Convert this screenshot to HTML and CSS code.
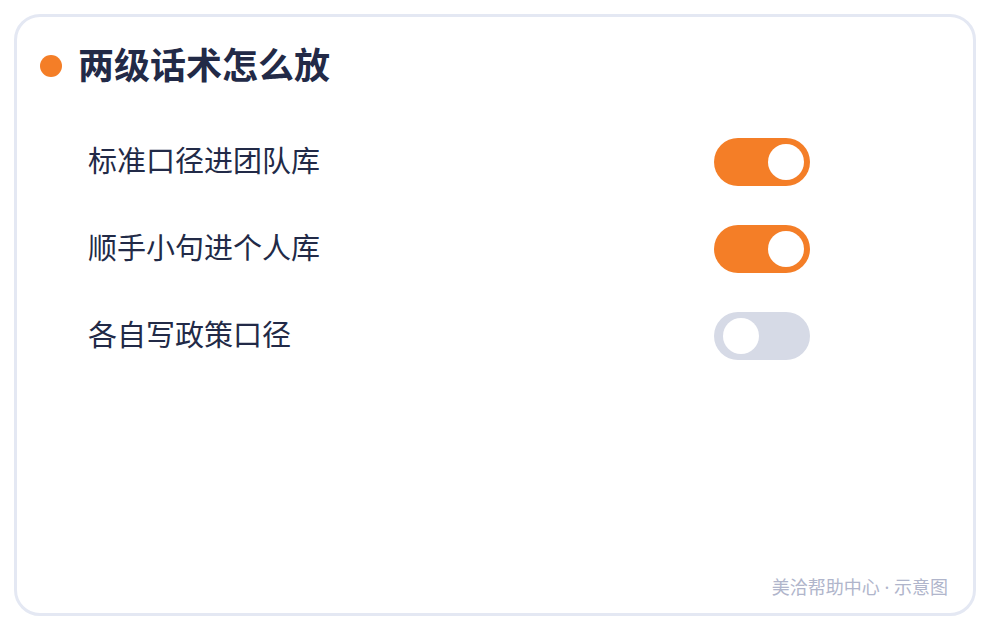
FILE: index.html
```html
<!DOCTYPE html>
<html lang="zh-CN">
<head>
    <meta charset="UTF-8">
    <meta name="viewport" content="width=device-width, initial-scale=1.0">
    <title>两级话术怎么放</title>
    <link rel="stylesheet" href="styles.css">
</head>
<body>

<main class="card">
    <h1 class="title">两级话术怎么放</h1>

    <!-- Switches -->
    <div class="options">
        <label class="option">
            <span class="option-text">标准口径进团队库</span>
            <input class="switch" type="checkbox" role="switch" checked>
        </label>
        <label class="option">
            <span class="option-text">顺手小句进个人库</span>
            <input class="switch" type="checkbox" role="switch" checked>
        </label>
        <label class="option">
            <span class="option-text">各自写政策口径</span>
            <input class="switch" type="checkbox" role="switch">
        </label>
    </div>

    <footer class="note">美洽帮助中心 · 示意图</footer>
</main>

</body>
</html>
```

FILE: styles.css
```css
* {
    box-sizing: border-box;
}

body {
    margin: 0;
    padding: 14px;
    min-height: 100vh;
    display: flex;
    background-color: #ffffff;
    color: #222a47;
    font-family: "Noto Sans CJK SC", sans-serif;
}

.card {
    flex: 1;
    display: flex;
    flex-direction: column;
    padding: 24px 25px 14px 23px;
    border: 3px solid #e4e8f3;
    border-radius: 26px;
}

/* Heading with the orange dot */
.title {
    display: flex;
    align-items: center;
    gap: 16px;
    margin: 0;
    font-size: 36px;
    line-height: 44px;
    font-weight: 700;
}

.title::before {
    content: "";
    width: 22px;
    height: 22px;
    margin-top: 6px;
    border-radius: 50%;
    background-color: #f47e27;
}

/* Option rows */
.options {
    display: flex;
    flex-direction: column;
    gap: 39px;
    margin-top: 53px;
    padding: 0 138px 0 48px;
}

.option {
    display: flex;
    align-items: center;
    justify-content: space-between;
    font-size: 29px;
    line-height: 42px;
    cursor: pointer;
}

.option-text {
    padding-bottom: 6px;
}

.switch {
    appearance: none;
    display: flex;
    align-items: center;
    width: 96px;
    height: 48px;
    margin: 0;
    padding: 0 6px 0 9px;
    border-radius: 24px;
    background-color: #d6dae6;
    cursor: pointer;
}

.switch::before {
    content: "";
    width: 36px;
    height: 36px;
    border-radius: 50%;
    background-color: #ffffff;
}

.switch:checked {
    justify-content: flex-end;
    background-color: #f47e27;
}

/* Caption in the bottom corner */
.note {
    margin-top: auto;
    text-align: right;
    color: #b0b5cb;
    font-family: "Noto Sans", "Noto Sans CJK SC", sans-serif;
    font-size: 18px;
    line-height: 24px;
}
```
